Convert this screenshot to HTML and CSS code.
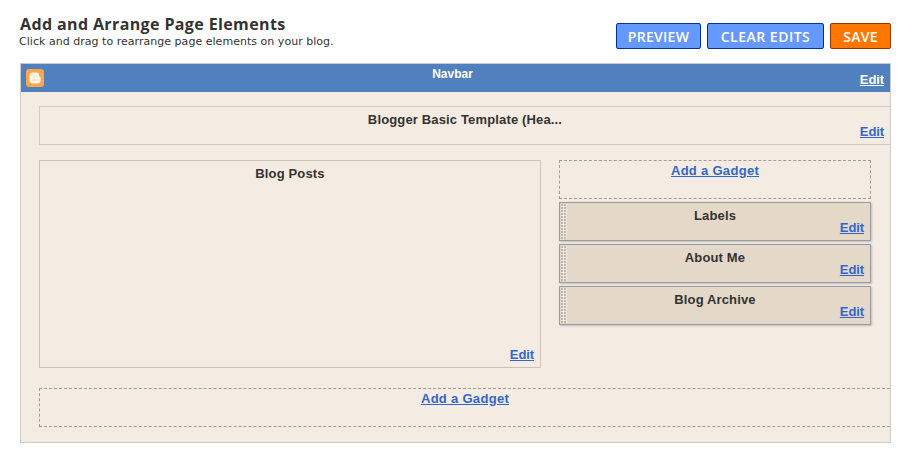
FILE: index.html
```html
<!DOCTYPE html>
<html lang="en">
<head>
    <meta charset="UTF-8">
    <title>Add and Arrange Page Elements</title>
    <link rel="stylesheet" href="styles.css">
</head>
<body>

    <div class="page-header">
        <div class="heading">
            <h1>Add and Arrange Page Elements</h1>
            <p>Click and drag to rearrange page elements on your blog.</p>
        </div>
        <div class="actions">
            <button class="btn btn-preview">Preview</button>
            <button class="btn btn-clear">Clear Edits</button>
            <button class="btn btn-save">Save</button>
        </div>
    </div>

    <div class="layout">
        <!-- Navbar -->
        <div class="navbar">
            <svg class="blogger-icon" viewBox="0 0 18 18" width="18" height="18">
                <rect width="18" height="18" rx="3" fill="#f9a64f"/>
                <path d="M7 3.500h3a3.200 3.200 0 0 1 3.200 3.200c0 .6.2.9.7 1 .5.2.8.5.8 1.100v2.200a3.500 3.500 0 0 1-3.500 3.500H7a3.500 3.500 0 0 1-3.500-3.500V7A3.500 3.500 0 0 1 7 3.500z" fill="#fff4e4"/>
                <path d="M6.500 7h3M6.500 11h5" stroke="#f9d5aa" stroke-width="1"/>
            </svg>
            <div class="widget-title">Navbar</div>
            <a class="edit edit-light" href="#">Edit</a>
        </div>

        <div class="sections">
            <div class="widget header-widget">
                <div class="widget-title">Blogger Basic Template (Hea...</div>
                <a class="edit" href="#">Edit</a>
            </div>

            <div class="columns">
                <div class="widget main-widget">
                    <div class="widget-title">Blog Posts</div>
                    <a class="edit" href="#">Edit</a>
                </div>

                <div class="sidebar">
                    <div class="add-gadget"><a href="#">Add a Gadget</a></div>
                    <div class="gadget">
                        <div class="widget-title">Labels</div>
                        <a class="edit" href="#">Edit</a>
                    </div>
                    <div class="gadget">
                        <div class="widget-title">About Me</div>
                        <a class="edit" href="#">Edit</a>
                    </div>
                    <div class="gadget">
                        <div class="widget-title">Blog Archive</div>
                        <a class="edit" href="#">Edit</a>
                    </div>
                </div>
            </div>

            <div class="add-gadget add-footer"><a href="#">Add a Gadget</a></div>
        </div>
    </div>

</body>
</html>
```

FILE: styles.css
```css
body {
    font-family: "Liberation Sans", Arial, sans-serif;
    background-color: #fff;
    color: #333;
    margin: 0;
    padding: 0 23px 0 20px;
}
.page-header {
    display: flex;
    justify-content: space-between;
    height: 63px;
}
.heading {
    padding-top: 15px;
}
.heading h1 {
    font-family: "Open Sans", sans-serif;
    font-size: 16px;
    line-height: 19px;
    font-weight: 700;
    letter-spacing: 0.38px;
    margin: 0;
}
.heading p {
    font-family: "DejaVu Sans", sans-serif;
    font-size: 11px;
    line-height: 13px;
    letter-spacing: 0.03px;
    margin: 1px 0 0 -1px;
}
.actions {
    display: flex;
    gap: 6px;
    padding-top: 23px;
    height: 26px;
}
.btn {
    font-family: "Open Sans", sans-serif;
    font-size: 14px;
    font-weight: 600;
    letter-spacing: 0.3px;
    text-transform: uppercase;
    color: #fff;
    background-color: #6699ff;
    border: 1px solid #003399;
    border-radius: 2px;
    padding: 0;
    height: 26px;
}
.btn-preview {
    width: 85px;
}
.btn-clear {
    width: 117px;
    letter-spacing: 0.5px;
}
.btn-save {
    width: 61px;
    background-color: #ff7700;
    border-color: #993300;
}
.layout {
    width: 869px;
    height: 378px;
    border: 1px solid #ccc;
    background-color: #f4ece3;
}
.navbar {
    position: relative;
    display: flex;
    flex-direction: column;
    height: 28px;
    padding-right: 6px;
    background-color: #5080be;
    color: #fff;
}
.blogger-icon {
    position: absolute;
    left: 5px;
    top: 5px;
}
.widget-title {
    font-size: 13px;
    font-weight: 700;
    line-height: 15px;
    letter-spacing: 0.15px;
    text-align: center;
    padding-top: 2px;
}
.navbar .widget-title {
    font-size: 12px;
    letter-spacing: 0;
    padding-top: 3px;
    color: #fff;
}
.edit {
    align-self: flex-end;
    font-size: 13px;
    font-weight: 700;
    line-height: 14px;
    letter-spacing: -0.1px;
    color: #3366cc;
}
.edit-light {
    color: #fff;
    margin-top: -9px;
}
.sections {
    padding: 14px 0 0 18px;
}
.widget {
    display: flex;
    flex-direction: column;
    justify-content: space-between;
    box-sizing: border-box;
    border: 1px solid #ccc;
    padding: 3px 6px 10px;
}
.header-widget {
    height: 39px;
    padding-bottom: 0;
    padding-top: 3px;
    justify-content: flex-start;
    border-right: none;
}
.header-widget .edit {
    margin-top: -2px;
}
.columns {
    display: flex;
    gap: 18px;
    margin-top: 15px;
}
.main-widget {
    width: 502px;
    height: 208px;
    border-color: #c9c3bb;
    padding-bottom: 5px;
}
.sidebar {
    display: flex;
    flex-direction: column;
    gap: 3px;
    width: 312px;
}
.add-gadget {
    box-sizing: border-box;
    height: 39px;
    border: 1px dashed #a39c94;
    padding-top: 2px;
    font-size: 13px;
    font-weight: 700;
    line-height: 15px;
    letter-spacing: 0.3px;
    text-align: center;
}
.add-gadget a {
    color: #3366cc;
}
.add-footer {
    margin-top: 20px;
    border-right: none;
}
.gadget {
    position: relative;
    display: flex;
    flex-direction: column;
    box-sizing: border-box;
    height: 39px;
    border: 1px solid #9a9aa4;
    box-shadow: 1px 1px 2px rgba(0, 0, 0, 0.2);
    background-color: #e4d9c9;
    padding: 3px 6px 0;
}
.gadget .edit {
    margin-top: -2px;
}
/* drag handle */
.gadget::before {
    content: "";
    position: absolute;
    left: 1px;
    top: 1px;
    bottom: 1px;
    width: 6px;
    background-color: #efe8dd;
    background-image: radial-gradient(circle at 1px 1px, #bdb8af 0.8px, transparent 1px);
    background-size: 3px 3px;
}
```
